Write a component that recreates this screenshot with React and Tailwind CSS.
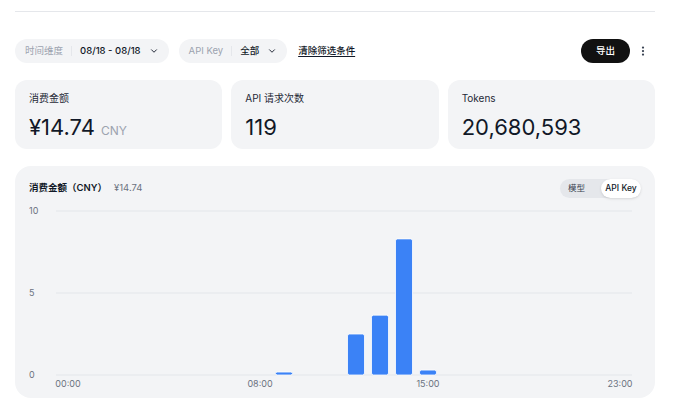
import React from 'react';
import { ChevronDown, EllipsisVertical } from 'lucide-react';

const FONT = { fontFamily: 'Inter, "Noto Sans CJK SC", sans-serif' };

// hourly spend, CNY
const HOURLY = { 9: 0.18, 12: 2.5, 13: 3.65, 14: 8.3, 15: 0.3 };

const FilterPill = ({ label, value }) => (
  <div className="flex items-center h-6 rounded-full bg-[#f3f4f6] pl-[10px] pr-[10px] text-[9.5px]">
    <span className="text-[#9ca3af]">{label}</span>
    <span className="mx-[8px] h-[10px] w-px bg-[#e5e7eb]" />
    <span className="font-medium text-[#111827]">{value}</span>
    <ChevronDown className="ml-[8px] w-[10px] h-[10px] text-[#111827]" strokeWidth={2.2} />
  </div>
);

const StatCard = ({ label, value, unit }) => (
  <div className="rounded-xl bg-[#f3f4f6] h-[69px] px-[14px] pt-[11px]">
    <div className="text-[10px] leading-[14px] text-[#1f2937]">{label}</div>
    <div className="mt-[8px] flex items-baseline gap-[6px]">
      <span className="text-[22px] leading-[28px] font-normal text-[#111827]">{value}</span>
      {unit && <span className="text-[12px] text-[#9ca3af]">{unit}</span>}
    </div>
  </div>
);

const Chart = () => {
  // svg origin sits at page x=29, y=203
  const x0 = 27;
  const slot = 24;
  const yBase = 172;
  const pxPerUnit = 16.4;
  const grid = [
    { v: 10, y: 8 },
    { v: 5, y: 90 },
    { v: 0, y: 172 },
  ];
  const ticks = [0, 8, 15, 23];

  return (
    <svg width="612" height="192" className="block" style={FONT}>
      {grid.map((g) => (
        <g key={g.v}>
          <line x1={x0} x2={x0 + slot * 24} y1={g.y} y2={g.y} stroke="#e3e5ea" strokeWidth="1.2" />
          <text x="0" y={g.y + 3} fontSize="9" fill="#6b7280">{g.v}</text>
        </g>
      ))}
      {Object.entries(HOURLY).map(([h, v]) => {
        const hgt = Math.max(v * pxPerUnit, 2.5);
        return (
          <rect
            key={h}
            x={x0 + Number(h) * slot + 3.5}
            y={yBase - hgt}
            width="17"
            height={hgt}
            rx="2"
            fill="#3b82f6"
            stroke="#ffffff"
            strokeWidth="0.8"
          />
        );
      })}
      {ticks.map((t) => (
        <text
          key={t}
          x={x0 + t * slot + 12}
          y="184"
          fontSize="9"
          fill="#6b7280"
          textAnchor="middle"
        >
          {String(t).padStart(2, '0')}:00
        </text>
      ))}
    </svg>
  );
};

export default function App() {
  return (
    <div className="w-[690px] h-[410px] bg-white pl-[15px] pt-[11px] overflow-hidden" style={FONT}>
      <div className="w-[640px]">
        <div className="border-t border-[#e5e7eb]" />

        {/* filters */}
        <div className="mt-[27px] flex items-center h-6">
          <FilterPill label="时间维度" value="08/18 - 08/18" />
          <div className="ml-[10px]">
            <FilterPill label="API Key" value="全部" />
          </div>
          <button className="ml-[11px] text-[9.5px] font-medium text-[#111827] underline underline-offset-2">
            清除筛选条件
          </button>
          <div className="ml-auto flex items-center">
            <button className="h-6 w-[49px] rounded-full bg-[#111111] text-white text-[9.5px] font-medium">
              导出
            </button>
            <EllipsisVertical className="ml-[7px] mr-[6px] w-[12px] h-[12px] text-[#374151]" strokeWidth={2.5} />
          </div>
        </div>

        {/* stats */}
        <div className="mt-[17px] grid grid-cols-3 gap-[9px]">
          <StatCard label="消费金额" value="¥14.74" unit="CNY" />
          <StatCard label="API 请求次数" value="119" />
          <StatCard label="Tokens" value="20,680,593" />
        </div>

        {/* chart */}
        <div className="mt-[17px] rounded-2xl bg-[#f3f4f6] h-[232px] px-[14px] pt-[13px]">
          <div className="flex items-center justify-between h-[19px]">
            <div className="flex items-baseline gap-[7px] text-[9.5px]">
              <span className="font-semibold text-[#111827]">消费金额（CNY）</span>
              <span className="text-[#6b7280]">¥14.74</span>
            </div>
            <div className="flex items-center w-[81px] h-[19px] rounded-full bg-[#e5e7eb] text-[8.5px]">
              <span className="flex-1 pl-[8px] text-[#374151]">模型</span>
              <span className="w-[40px] h-[19px] flex items-center justify-center rounded-full bg-white font-medium text-[#111827] shadow-sm">
                API Key
              </span>
            </div>
          </div>
          <div className="mt-[5px]">
            <Chart />
          </div>
        </div>
      </div>
    </div>
  );
}
